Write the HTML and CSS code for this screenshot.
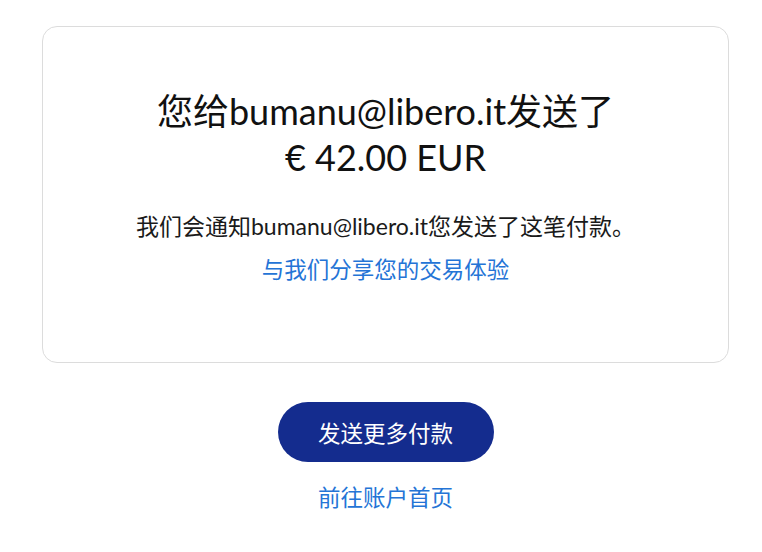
FILE: index.html
```html
<!DOCTYPE html>
<html lang="zh-CN">
<head>
  <meta charset="UTF-8" />
  <meta name="viewport" content="width=device-width, initial-scale=1.0"/>
  <title>付款已发送</title>
  <link rel="stylesheet" href="styles.css">
</head>
<body>
  <div class="page">
    <div class="card">
      <h1 class="title">您给bumanu@libero.it发送了<br>€ 42.00 EUR</h1>
      <p class="notice">我们会通知bumanu@libero.it您发送了这笔付款。</p>
      <a class="link" href="#">与我们分享您的交易体验</a>
    </div>

    <div class="actions">
      <button type="button" class="btn-primary">发送更多付款</button>
      <a class="link" href="#">前往账户首页</a>
    </div>
  </div>
</body>
</html>
```

FILE: styles.css
```css
* {
  box-sizing: border-box;
  margin: 0;
  padding: 0;
}

body {
  font-family: Lato, "Noto Sans CJK SC", sans-serif;
  background: #fff;
  color: #1a1a1a;
}

.page {
  width: 687px;
  margin: 26px 0 0 42px;
}

.card {
  display: flex;
  flex-direction: column;
  align-items: center;
  text-align: center;
  border: 1px solid #dcdcdc;
  border-radius: 15px;
  padding: 61px 20px 76px;
}

.title {
  font-size: 36px;
  font-weight: 400;
  line-height: 46px;
  color: #111;
}

.notice {
  font-size: 23px;
  line-height: 32px;
  margin-top: 30px;
}

.link {
  display: block;
  font-size: 22.5px;
  line-height: 32px;
  color: #2474d6;
  text-decoration: none;
}

.card .link {
  margin-top: 12px;
}

.actions {
  display: flex;
  flex-direction: column;
  align-items: center;
  margin-top: 39px;
}

.btn-primary {
  width: 216px;
  height: 60px;
  border: none;
  border-radius: 30px;
  background: #142c8e;
  color: #fff;
  font-family: inherit;
  font-size: 22.5px;
  cursor: pointer;
}

.actions .link {
  margin-top: 20px;
}
```
